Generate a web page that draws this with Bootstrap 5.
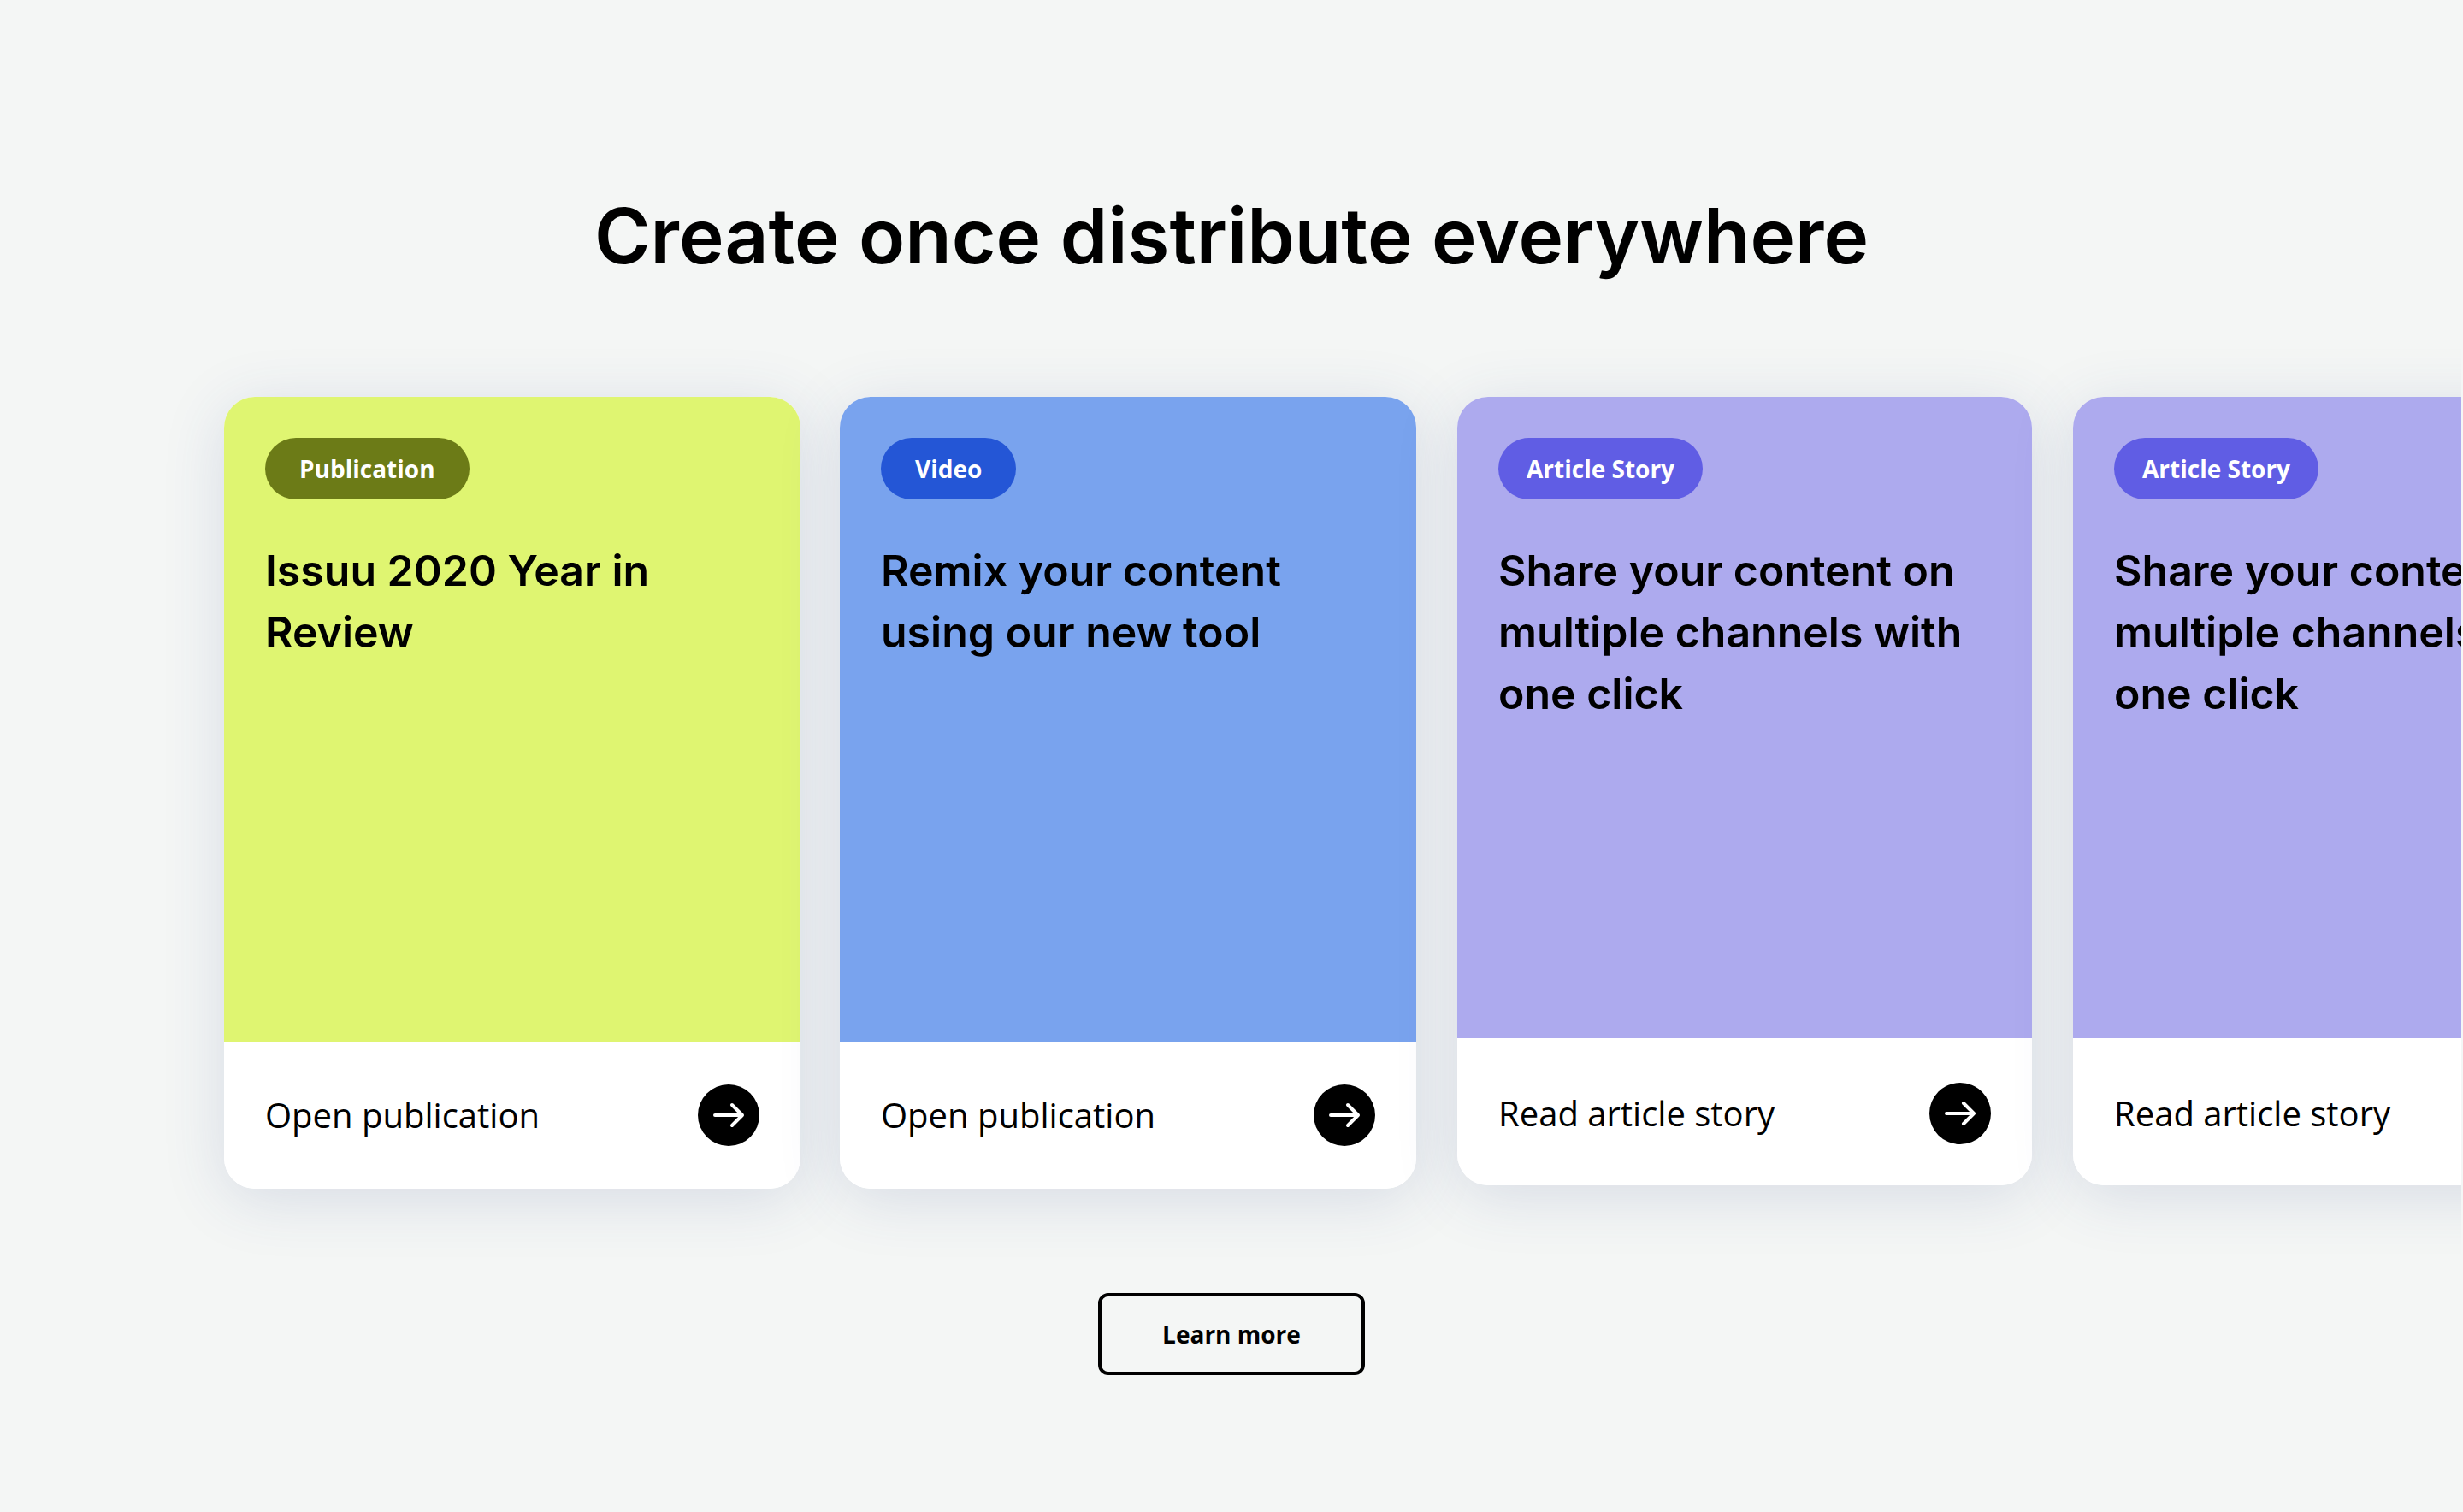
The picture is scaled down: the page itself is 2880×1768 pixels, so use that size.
<!DOCTYPE html>
<html lang="en">
<head>
<meta charset="utf-8">
<meta name="viewport" content="width=device-width, initial-scale=1">
<title>Create once distribute everywhere</title>
<link href="https://cdn.jsdelivr.net/npm/bootstrap@5.3.0/dist/css/bootstrap.min.css" rel="stylesheet">
<style>
  body { background: #f4f6f5; color: #000; font-family: "Open Sans", "Noto Sans", sans-serif; }
  .showcase { padding: 212px 0 160px; }
  .showcase-title { font: 600 89px/128px Inter, sans-serif; margin: 0; }
  /* vertical padding leaves room for the card shadows inside the clipped strip */
  .story-strip { gap: 46px; padding: 124px 0 122px 262px; margin-right: 2px; }
  .story-card { flex: 0 0 674px; border: 0; border-radius: 36px; box-shadow: 0 12px 72px rgba(57, 73, 138, .15); }
  .story-read { flex-basis: 672px; margin-left: 2px; }
  .story-cover { min-height: 754px; padding: 48px; border-radius: 36px 36px 0 0; }
  .story-read .story-cover { min-height: 750px; }
  .story-tag { height: 72px; padding: 0 40px; font-size: 28px; font-weight: 700; color: #fff; }
  .story-read .story-tag { padding: 0 33px; }
  .story-name { font: 600 50px/72px Inter, sans-serif; margin: 47px 0 0; }
  .story-open { height: 172px; padding: 0 48px; font-size: 40px; color: #000; text-decoration: none; border-radius: 0 0 36px 36px; }
  .story-read .story-open { padding-top: 4px; }
  .story-open svg { width: 72px; height: 72px; }
  .lime { background: #dff571; } .lime .story-tag { background: #6c7b17; }
  .sky { background: #79a3ee; } .sky .story-tag { background: #2456d6; }
  .lilac { background: #adaaee; } .lilac .story-tag { background: #605de4; }
  .more-btn { width: 312px; height: 96px; border: 4px solid #000; border-radius: 12px; font-size: 28px; font-weight: 700; color: #000; padding: 0; }
</style>
<script src="https://cdn.jsdelivr.net/npm/bootstrap@5.3.0/dist/js/bootstrap.bundle.min.js"></script>
</head>
<body>
<svg class="d-none" aria-hidden="true">
  <symbol id="arrow" viewBox="0 0 72 72">
    <circle cx="36" cy="36" r="36"/>
    <path d="M20 36H52M40 24L52 36L40 48" fill="none" stroke="#fff" stroke-width="4" stroke-linecap="round" stroke-linejoin="round"/>
  </symbol>
</svg>
<main class="showcase min-vh-100">
  <h1 class="showcase-title text-center">Create once distribute everywhere</h1>
  <div class="story-strip d-flex align-items-start overflow-hidden">
    <article class="card story-card">
      <div class="story-cover lime">
        <span class="story-tag d-inline-flex align-items-center rounded-pill">Publication</span>
        <h2 class="story-name">Issuu 2020 Year in<br>Review</h2>
      </div>
      <a href="#" class="story-open d-flex align-items-center justify-content-between bg-white">Open publication <svg aria-hidden="true"><use href="#arrow"/></svg></a>
    </article>
    <article class="card story-card">
      <div class="story-cover sky">
        <span class="story-tag d-inline-flex align-items-center rounded-pill">Video</span>
        <h2 class="story-name">Remix your content<br>using our new tool</h2>
      </div>
      <a href="#" class="story-open d-flex align-items-center justify-content-between bg-white">Open publication <svg aria-hidden="true"><use href="#arrow"/></svg></a>
    </article>
    <article class="card story-card story-read">
      <div class="story-cover lilac">
        <span class="story-tag d-inline-flex align-items-center rounded-pill">Article Story</span>
        <h2 class="story-name text-nowrap">Share your content on<br>multiple channels with<br>one click</h2>
      </div>
      <a href="#" class="story-open d-flex align-items-center justify-content-between bg-white">Read article story <svg aria-hidden="true"><use href="#arrow"/></svg></a>
    </article>
    <article class="card story-card story-read">
      <div class="story-cover lilac">
        <span class="story-tag d-inline-flex align-items-center rounded-pill">Article Story</span>
        <h2 class="story-name text-nowrap">Share your content on<br>multiple channels with<br>one click</h2>
      </div>
      <a href="#" class="story-open d-flex align-items-center justify-content-between bg-white">Read article story <svg aria-hidden="true"><use href="#arrow"/></svg></a>
    </article>
  </div>
  <div class="text-center">
    <button type="button" class="btn more-btn">Learn more</button>
  </div>
</main>
</body>
</html>
